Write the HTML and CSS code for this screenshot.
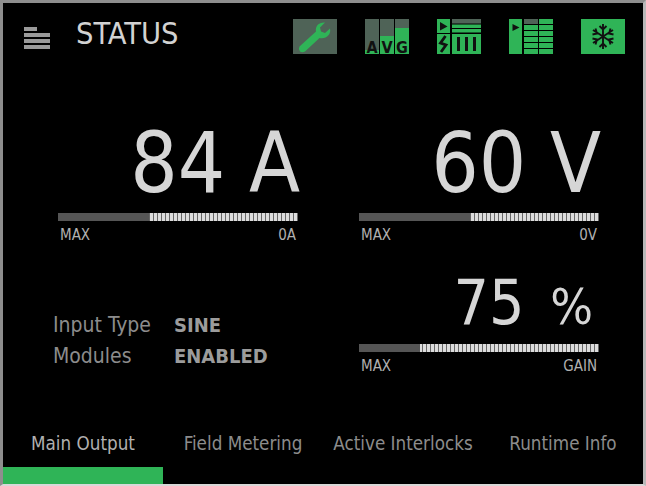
FILE: index.html
```html
<!DOCTYPE html>
<html lang="en">
<head>
<meta charset="utf-8">
<title>Status</title>
<link rel="stylesheet" href="styles.css">
</head>
<body>
<div class="frame">
  <header class="top">
    <div class="menu"><i class="m1"></i><i></i><i></i><i></i></div>
    <h1 class="title">STATUS</h1>
    <nav class="tools">
      <svg class="tool" viewBox="0 0 44 35"><rect width="44" height="35" fill="#4f6357"/><path d="M6.500 27.500 L23 12.500 C22 7 26 3 32 3.500 L27 8.500 L28 12.500 L32 14 L37 9.500 C38.500 15.500 33 20.500 26.500 19 L12 32.500 Q9 34 7 32.500 Q5 30 6.500 27.500Z" fill="#2fb457"/></svg>
      <svg class="tool" viewBox="0 0 44 35"><rect width="14" height="35" fill="#4f6357"/><rect x="15" width="14" height="35" fill="#4f6357"/><rect x="30" width="14" height="35" fill="#4f6357"/><rect y="31" width="14" height="4" fill="#2fb457"/><rect x="15" y="17" width="14" height="18" fill="#2fb457"/><rect x="30" y="9" width="14" height="26" fill="#2fb457"/><text class="avg" x="7" y="34" text-anchor="middle">A</text><text class="avg" x="22" y="34" text-anchor="middle">V</text><text class="avg" x="37" y="34" text-anchor="middle">G</text></svg>
      <svg class="tool" viewBox="0 0 44 35"><rect width="13" height="14" fill="#2fb457"/><path d="M3 3 L10.500 7.500 L3 11.500Z" fill="#111"/><rect y="15" width="13" height="20" fill="#2fb457"/><path d="M8.500 17 L3.500 24 L9 26 L4 33" fill="none" stroke="#111" stroke-width="2.800"/><rect x="15" width="29" height="4.500" fill="#4f6357"/><rect x="15" y="5.500" width="29" height="3.500" fill="#2fb457"/><rect x="15" y="10" width="29" height="3.500" fill="#2fb457"/><rect x="15" y="15" width="29" height="20" fill="#2fb457"/><rect x="20" y="18" width="3" height="14" fill="#111"/><rect x="28" y="18" width="3" height="14" fill="#111"/><rect x="36" y="18" width="3" height="14" fill="#111"/></svg>
      <svg class="tool" viewBox="0 0 44 35"><rect width="13" height="35" fill="#2fb457"/><path d="M3.500 5 L10.500 8.500 L3.500 12Z" fill="#111"/><rect x="15" width="14" height="5" fill="#4f6357"/><rect x="30" width="14" height="5" fill="#2fb457"/><g fill="#2fb457"><rect x="15" y="6" width="14" height="5"/><rect x="30" y="6" width="14" height="5"/><rect x="15" y="12" width="14" height="5"/><rect x="30" y="12" width="14" height="5"/><rect x="15" y="18" width="14" height="5"/><rect x="30" y="18" width="14" height="5"/><rect x="15" y="24" width="14" height="5"/><rect x="30" y="24" width="14" height="5"/><rect x="15" y="30" width="14" height="5"/><rect x="30" y="30" width="14" height="5"/></g></svg>
      <svg class="tool" viewBox="0 0 44 35"><rect width="44" height="35" fill="#2fb457"/><g stroke="#111" stroke-width="1.900" fill="none"><path d="M22 5 V30 M18.500 7 L22 10.500 L25.500 7 M18.500 28 L22 24.500 L25.500 28"/><path d="M12 11 L32 24 M11.500 15.500 L16 14.500 L14.500 9.500 M32.500 19.500 L28 20.500 L29.500 25.500"/><path d="M12 24 L32 11 M14.500 25.500 L16 20.500 L11.500 19.500 M29.500 9.500 L28 14.500 L32.500 15.500"/></g></svg>
    </nav>
  </header>
  <main class="panel">
    <section class="gauge big">
      <div class="value">84 A</div>
      <div class="bar" style="--fill:91px"></div>
      <div class="scale"><span>MAX</span><span>0A</span></div>
    </section>
    <section class="gauge big">
      <div class="value">60 V</div>
      <div class="bar" style="--fill:111px"></div>
      <div class="scale"><span>MAX</span><span>0V</span></div>
    </section>
    <dl class="info">
      <dt>Input Type</dt><dd>SINE</dd>
      <dt>Modules</dt><dd>ENABLED</dd>
    </dl>
    <section class="gauge small">
      <div class="value">75 <span class="pct">%</span></div>
      <div class="bar" style="--fill:61px"></div>
      <div class="scale"><span>MAX</span><span>GAIN</span></div>
    </section>
  </main>
  <footer class="tabs">
    <div class="tab active">Main Output</div>
    <div class="tab">Field Metering</div>
    <div class="tab">Active Interlocks</div>
    <div class="tab">Runtime Info</div>
  </footer>
</div>
</body>
</html>
```
FILE: styles.css
```css
* { box-sizing: border-box; }
html, body { margin: 0; height: 100%; background: #000; }
body { font-family: "DejaVu Sans Condensed", "DejaVu Sans", sans-serif; font-stretch: condensed; overflow: hidden; }
.frame {
  width: 646px; height: 486px; background: #000;
  border-style: solid; border-color: #8e8e8e #b8b8b8 #d8d8d8 #8e8e8e;
  border-width: 3px 3px 2px 3px;
  display: flex; flex-direction: column;
}
.top { height: 63px; flex: none; display: flex; align-items: flex-start; padding: 16px 18px 0 21px; }
.menu { width: 26px; margin-top: 8px; display: flex; flex-direction: column; gap: 2px; flex: none; }
.menu i { display: block; height: 4px; background: #9a9a9a; }
.menu .m1 { width: 13px; }
.title { margin: 0 0 0 26px; font-size: 30.500px; font-weight: 400; color: #d2d2d2; line-height: 30px; }
.tools { margin-left: auto; display: flex; gap: 28px; }
.tool { width: 44px; height: 35px; display: block; overflow: visible; }
.avg { font: 700 16px "DejaVu Sans Condensed", "DejaVu Sans", sans-serif; fill: #111; }
.panel { flex: 1; display: grid; grid-template-columns: 301px 240px; grid-template-rows: 178px 1fr; padding-left: 55px; }
.gauge { width: 240px; display: flex; flex-direction: column; }
.big { height: 178px; justify-content: flex-end; }
.big .value { font-size: 83px; line-height: 91px; white-space: pre; text-align: right; color: #d6d6d6; margin-right: -2px; }
.small { justify-content: flex-start; padding-top: 26px; }
.small .value { font-size: 62px; line-height: 66px; text-align: right; color: #d6d6d6; padding-right: 6px; }
.pct { font-size: 50px; margin-left: 8px; }
.bar { height: 8px; margin-top: 4px; background: linear-gradient(#555,#555) left / var(--fill) 100% no-repeat, repeating-linear-gradient(90deg,#dcdcdc 0 3px,#666 3px 4px); }
.scale { display: flex; justify-content: space-between; padding: 5px 2px 0; font-size: 15px; line-height: 18px; color: #b0b0b0; }
.info { margin: 0; align-self: start; margin-top: 70px; margin-left: -5px; display: grid; grid-template-columns: 121px auto; row-gap: 9px; font-size: 21px; line-height: 22px; }
.info dt { color: #8c8c8c; }
.info dd { margin: 0; font-weight: 700; font-size: 20px; color: #9c9c9c; }
.tabs { flex: none; display: grid; grid-template-columns: repeat(4, 160px); height: 60px; }
.tab { text-align: center; font-size: 18.700px; line-height: 22px; padding-top: 9px; color: #8c8c8c; white-space: nowrap; }
.tab.active { color: #b0b0b0; border-bottom: 17px solid #2fb457; }
```
